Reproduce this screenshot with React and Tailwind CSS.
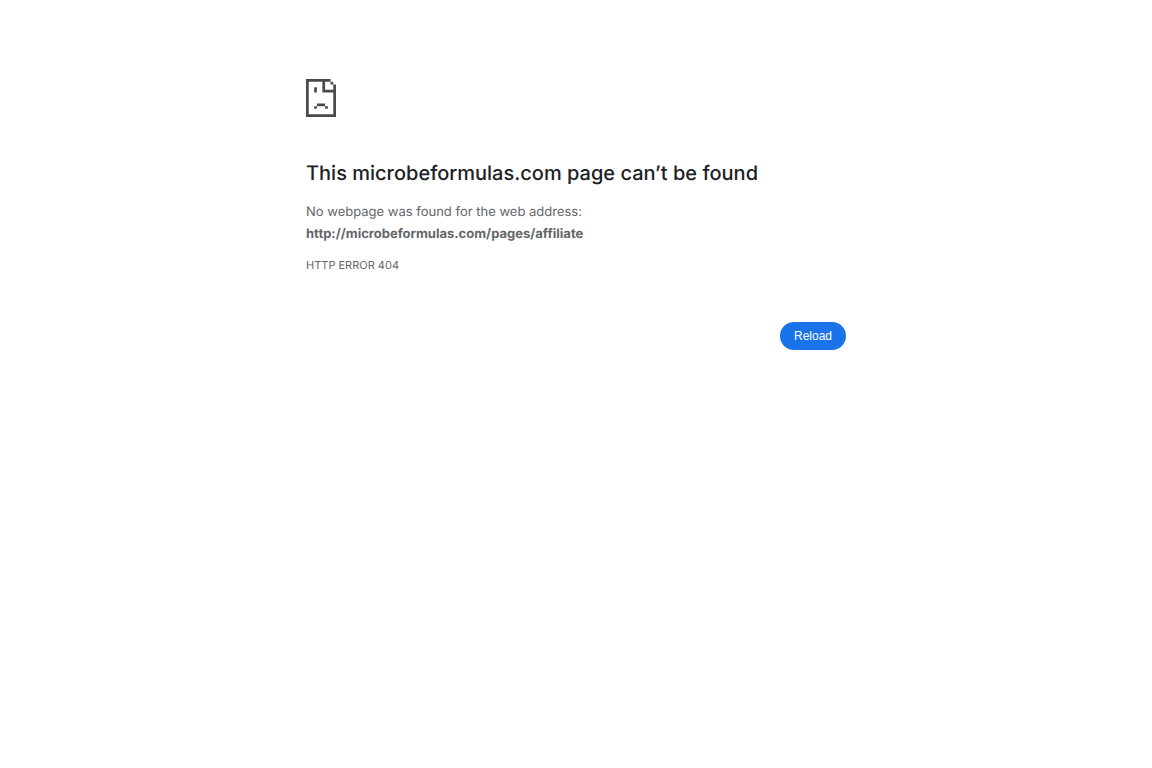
import React from 'react';

const SadPageIcon = () => (
  <svg className="w-[30px] h-[38px] text-[#4a4a4d]" viewBox="0 0 11 14" preserveAspectRatio="none" fill="currentColor" aria-hidden="true">
    <path d="M0 0H9V1H10V2H11V14H0ZM1 1V13H10V5H6V1ZM7 1V4H10V2H9V1Z" fillRule="evenodd"/>
    <path d="M3 3H4V5H3ZM4 9H7V10H8V11H7V10H4V11H3V10H4Z"/>
  </svg>
)

const ErrorPage = ({host, url, code}) => {
  return (
    <main className="w-full max-w-[540px] mx-auto pt-[79px] font-['Inter','Liberation_Sans',sans-serif] text-[#646669] [text-rendering:geometricPrecision]">
      <SadPageIcon/>
      <h1 className="mt-10 text-xl leading-8 font-medium text-[#202124]">
        This {host} page can’t be found
      </h1>
      <p className="mt-3 text-[13px] leading-[22px]">
        No webpage was found for the web address:
        <strong className="block font-bold">{url}</strong>
      </p>
      <p className="mt-2.5 text-[11px] leading-5">{code}</p>
      <div className="mt-[47px] flex justify-end">
        <button
          type="button"
          onClick={() => window.location.reload()}
          className="h-7 px-3.5 rounded-full bg-[#1a73e8] font-['Liberation_Sans',Arial,sans-serif] text-xs text-white">
          Reload
        </button>
      </div>
    </main>
  )
}

const App = () => (
  <div className="min-h-screen bg-white">
    <ErrorPage
      host="microbeformulas.com"
      url="http://microbeformulas.com/pages/affiliate"
      code="HTTP ERROR 404"
    />
  </div>
)


export default App
